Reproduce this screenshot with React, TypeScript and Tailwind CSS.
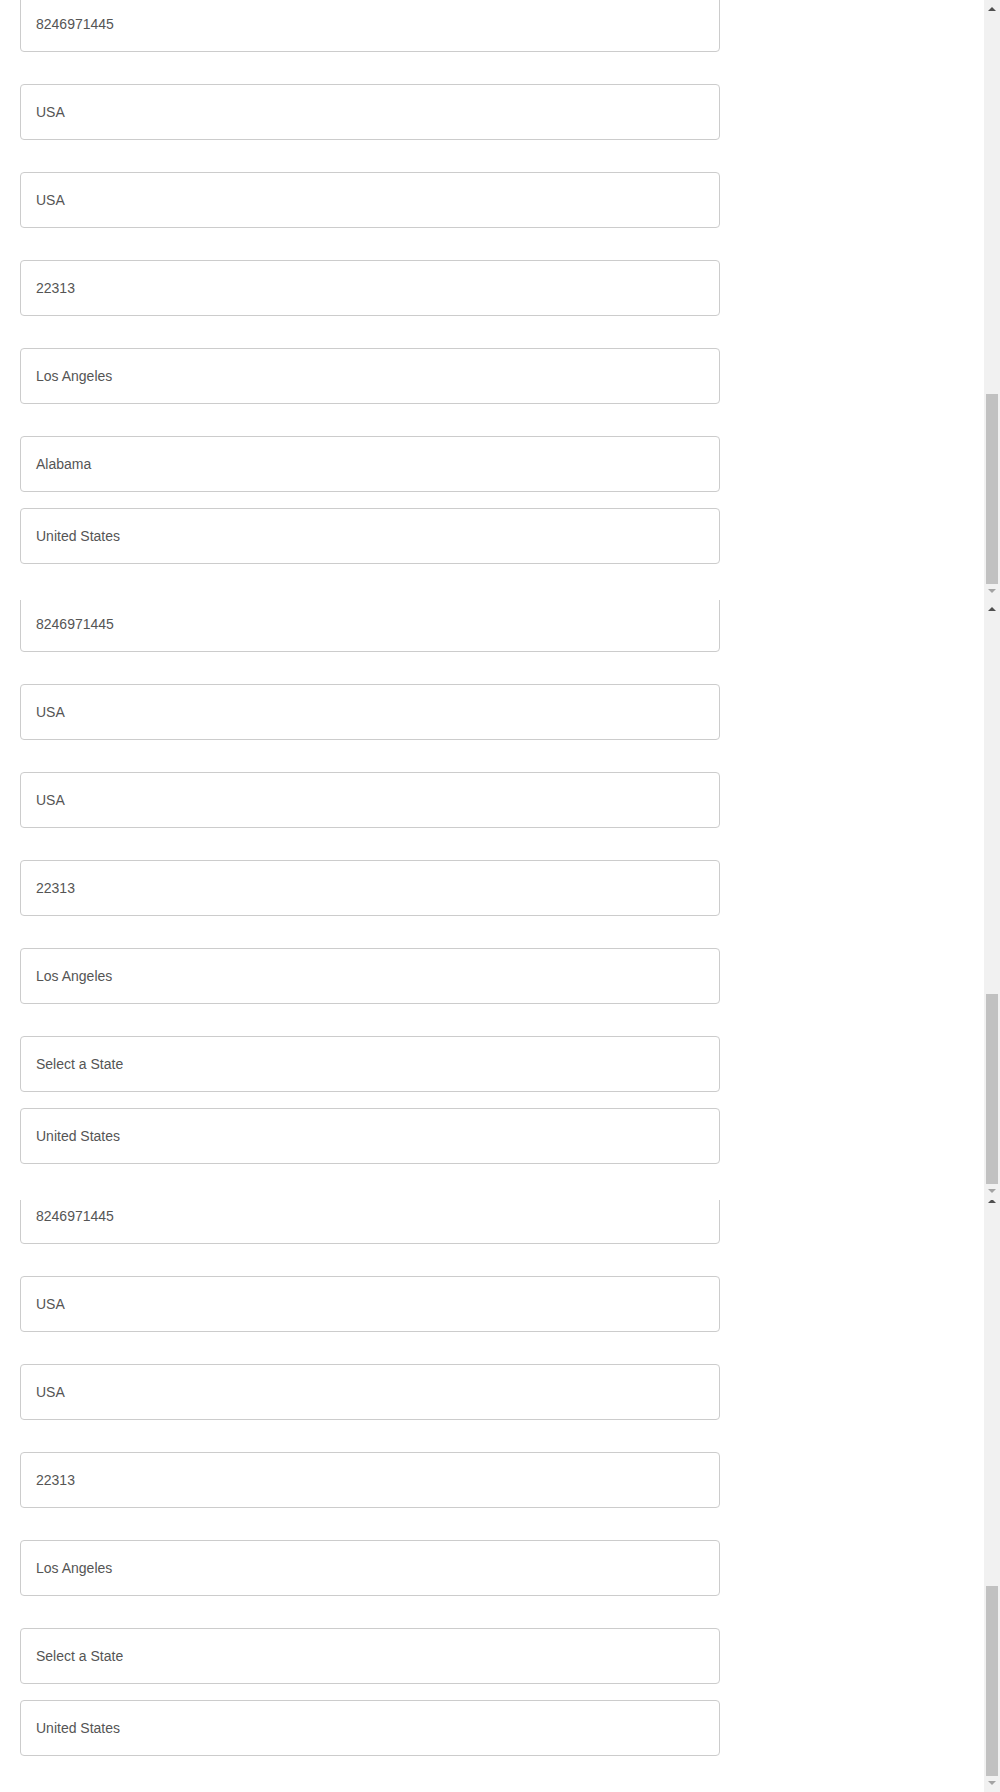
import React from "react";

const Field = ({ value, className = "" }: { value: string; className?: string }) => (
  <div
    className={`flex h-[56px] w-[700px] shrink-0 items-center rounded-[4px] border border-[#cccccc] bg-white pl-[15px] text-[14px] text-[#555555] ${className}`}
    style={{ fontFamily: '"Liberation Sans", Arial, sans-serif' }}
  >
    {value}
  </div>
);

const ScrollBar = () => (
  <div className="flex h-[600px] w-[16px] shrink-0 flex-col items-center bg-[#f1f1f1]">
    <svg width="8" height="4" viewBox="0 0 8 4" className="mt-[7px] shrink-0">
      <polygon points="0,4 8,4 4,0" fill="#505050" />
    </svg>
    <div className="mt-[383px] h-[190px] w-[12px] shrink-0 bg-[#c1c1c1]" />
    <svg width="8" height="4" viewBox="0 0 8 4" className="mt-[5px] shrink-0">
      <polygon points="0,0 8,0 4,4" fill="#a3a3a3" />
    </svg>
  </div>
);

const Panel = ({ state }: { state: string }) => (
  <div className="flex h-[600px] w-[1000px] bg-white">
    <div className="flex h-[600px] w-[984px] flex-col overflow-hidden pl-[20px]">
      <Field value="8246971445" className="-mt-[4px] mb-[32px]" />
      <Field value="USA" className="mb-[32px]" />
      <Field value="USA" className="mb-[32px]" />
      <Field value="22313" className="mb-[32px]" />
      <Field value="Los Angeles" className="mb-[32px]" />
      <Field value={state} className="mb-[16px]" />
      <Field value="United States" />
    </div>
    <ScrollBar />
  </div>
);

export default function App() {
  return (
    <div className="h-[1792px] w-[1000px] overflow-hidden bg-white">
      <div className="h-[600px] overflow-hidden">
        <Panel state="Alabama" />
      </div>
      <div className="h-[600px] overflow-hidden">
        <Panel state="Select a State" />
      </div>
      <div className="h-[592px] overflow-hidden">
        <div className="-mt-[8px]">
          <Panel state="Select a State" />
        </div>
      </div>
    </div>
  );
}
